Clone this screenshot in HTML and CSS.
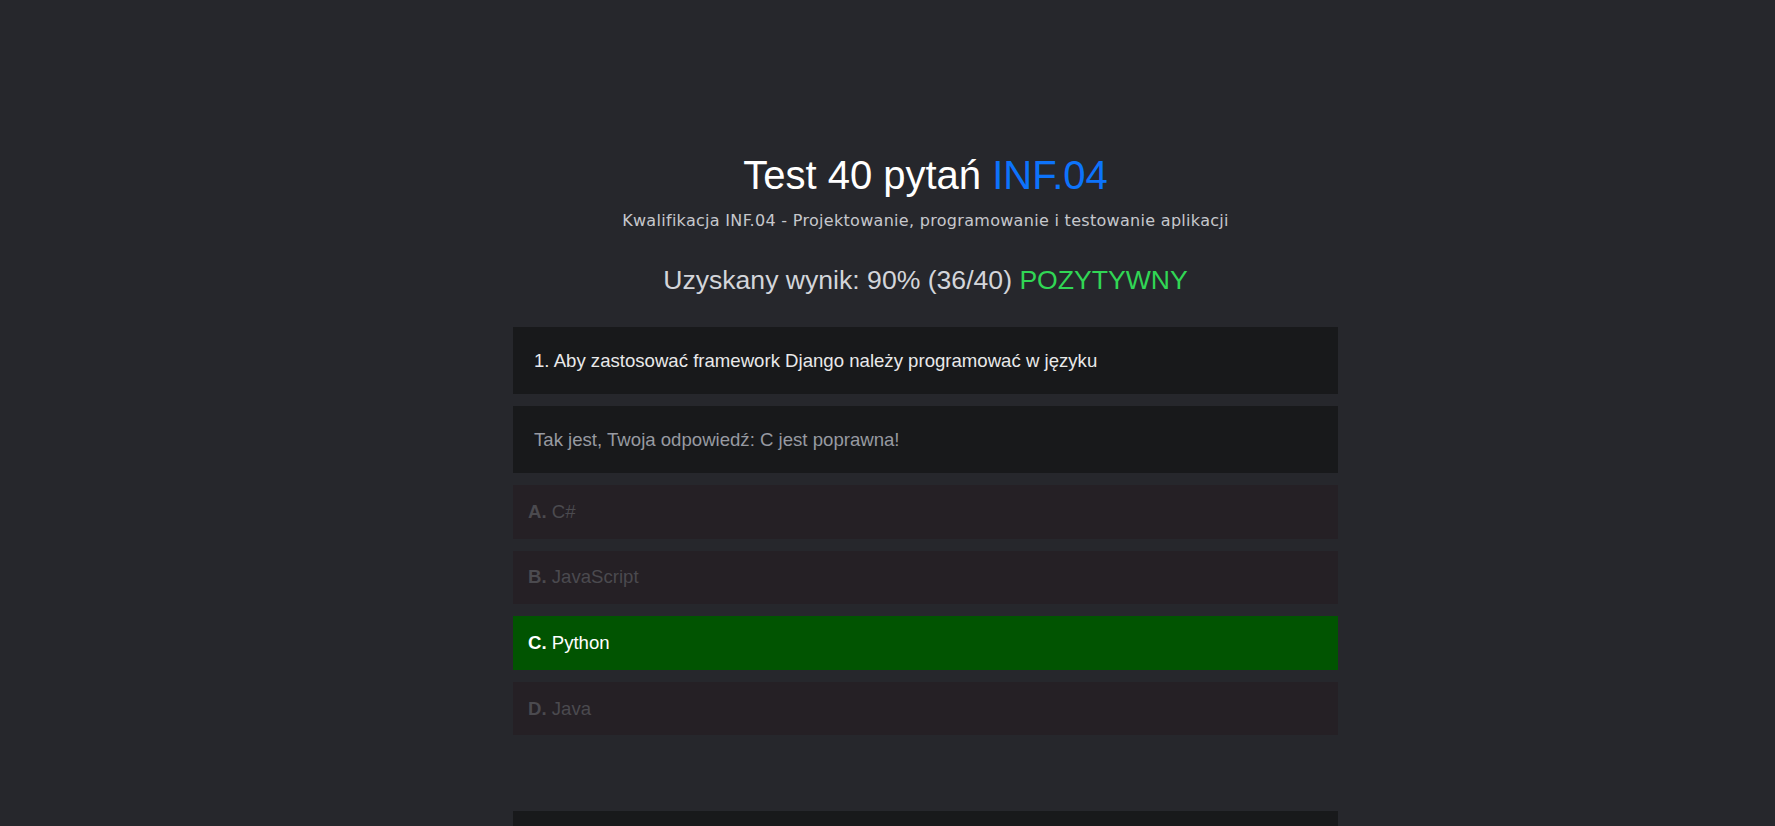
FILE: index.html
```html
<!DOCTYPE html>
<html lang="pl">
<head>
<meta charset="utf-8">
<title>Test 40 pytań INF.04</title>
<link rel="stylesheet" href="styles.css">
</head>
<body>
<main class="page">
  <div class="container">
    <header class="head">
      <h1 class="title">Test 40 pytań <span class="accent">INF.04</span></h1>
      <p class="subtitle">Kwalifikacja INF.04 - Projektowanie, programowanie i testowanie aplikacji</p>
      <h2 class="score">Uzyskany wynik: 90% (36/40) <span class="pass">POZYTYWNY</span></h2>
    </header>

    <section class="question">
      <div class="q-text">1. Aby zastosować framework Django należy programować w języku</div>
      <div class="q-feedback">Tak jest, Twoja odpowiedź: C jest poprawna!</div>
      <div class="answers">
        <div class="answer"><b>A.</b> C#</div>
        <div class="answer"><b>B.</b> JavaScript</div>
        <div class="answer correct"><b>C.</b> Python</div>
        <div class="answer"><b>D.</b> Java</div>
      </div>
    </section>

    <section class="question">
      <div class="q-text"></div>
    </section>
  </div>
</main>
</body>
</html>
```

FILE: styles.css
```css
html, body {
  margin: 0;
  padding: 0;
  background: #26272c;
}
body {
  font-family: "Liberation Sans", Arial, sans-serif;
  color: #e8e8e8;
}
.page {
  padding-left: 76px;
  padding-top: 151px;
}
.container {
  width: 825px;
  margin: 0 auto;
}
.head {
  text-align: center;
}
.title {
  margin: 0;
  font-size: 40px;
  line-height: 48px;
  font-weight: 400;
  color: #ffffff;
}
.accent {
  color: #0d73fb;
}
.subtitle {
  margin: 10px 0 0;
  font-family: "DejaVu Sans", "Open Sans", sans-serif;
  font-size: 16px;
  line-height: 24px;
  letter-spacing: 0.3px;
  color: #c6c8cd;
}
.score {
  margin: 31px 0 0;
  font-size: 26.6px;
  line-height: 32px;
  font-weight: 400;
  color: #d3d5da;
}
.pass {
  color: #31d655;
}
.question {
  margin-top: 31px;
  display: flex;
  flex-direction: column;
  gap: 12px;
}
.question + .question {
  margin-top: 76px;
}
.q-text, .q-feedback {
  background: #18191b;
  height: 67px;
  display: flex;
  align-items: center;
  padding: 0 21px;
  font-size: 18.6px;
}
.q-text {
  color: #e9e9ea;
}
.q-feedback {
  color: #979aa1;
}
.answers {
  display: flex;
  flex-direction: column;
  gap: 12px;
}
.answer {
  background: #252025;
  height: 53.6px;
  display: flex;
  align-items: center;
  padding: 0 15px;
  font-size: 18.6px;
  color: #4b4a4f;
  white-space: pre;
}
.answer b {
  font-weight: 700;
}
.answer.correct {
  background: #015401;
  color: #ffffff;
}
```
